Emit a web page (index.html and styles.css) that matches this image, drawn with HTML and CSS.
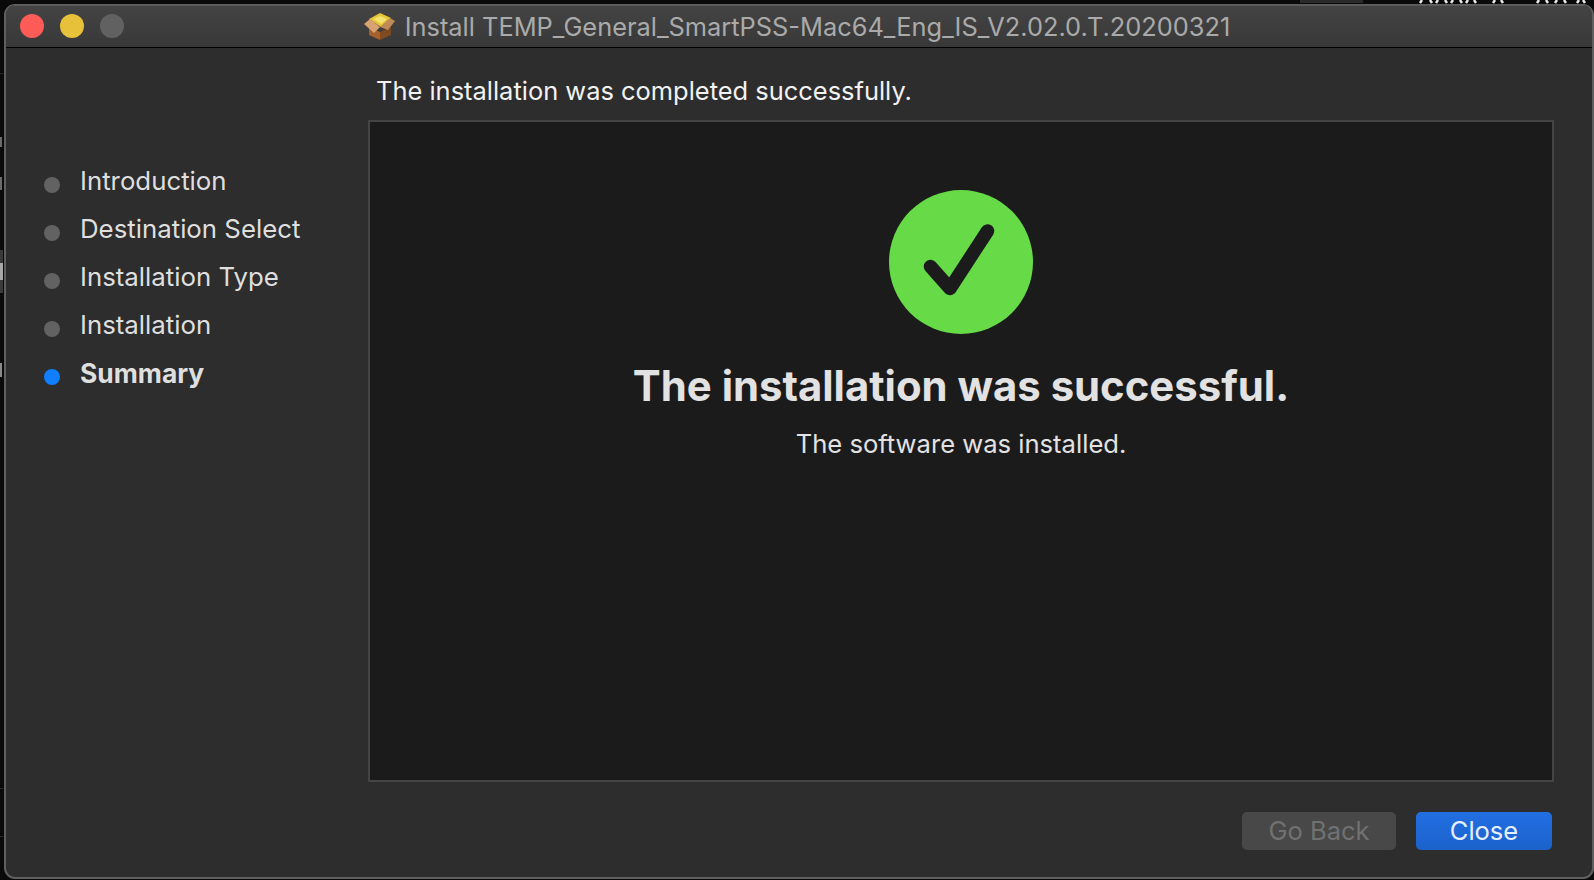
FILE: index.html
```html
<!DOCTYPE html>
<html lang="en">
<head>
  <meta charset="UTF-8" />
  <title>Install TEMP_General_SmartPSS-Mac64_Eng_IS_V2.02.0.T.20200321</title>
  <link rel="stylesheet" href="styles.css">
</head>
<body>
  <!-- whatever is behind the window, only slivers show -->
  <svg class="backdrop" width="1594" height="880" viewBox="0 0 1594 880">
    <rect x="1300" y="0" width="63" height="3" fill="#2b2b2b"/>
    <path d="M1420 3 L1422 0 M1432 3 L1430 0 M1436 3 L1438 0 M1447 3 L1445 0 M1451 3 L1453 0 M1462 3 L1460 0 M1466 3 L1468 0 M1476 3 L1474 0 M1493 3 L1495 0 M1503 3 L1501 0 M1537 3 L1539 0 M1548 3 L1546 0 M1555 3 L1557 0 M1566 3 L1564 0 M1577 3 L1579 0 M1585 3 L1583 0" stroke="#e8e8e8" stroke-width="2.5" fill="none"/>
    <rect x="0" y="250" width="3" height="43" fill="#3a3a3a"/>
    <rect x="0" y="263" width="3" height="17" fill="#a8a8a8"/>
    <rect x="0" y="137" width="2" height="10" fill="#6a6a6a"/>
    <rect x="0" y="177" width="2" height="13" fill="#6a6a6a"/>
    <rect x="0" y="363" width="2" height="14" fill="#8a8a8a"/>
    <rect x="0" y="73" width="3" height="1" fill="#2a2a2a"/>
    <rect x="0" y="788" width="3" height="1" fill="#2a2a2a"/>
    <rect x="0" y="836" width="3" height="1" fill="#2a2a2a"/>
  </svg>

  <div class="window">
    <header class="titlebar">
      <div class="lights">
        <span class="light light-close"></span>
        <span class="light light-min"></span>
        <span class="light light-zoom"></span>
      </div>
      <div class="title">
        <svg class="pkg" width="32" height="28" viewBox="0 0 32 28">
          <polygon points="5,15 16,20 16,28 5,23" fill="#a5612b"/>
          <polygon points="16,20 27,15 27,23 16,28" fill="#7f4a20"/>
          <polygon points="5,7 16,1 27,6 17,15" fill="#e4c534"/>
          <polygon points="9,7 16,4 23,7 17,12" fill="#f3e070"/>
          <polygon points="0,12 6,7 16,15 10,21" fill="#d9a273"/>
          <polygon points="31,9 26,6 16,15 24,18" fill="#c08a58"/>
        </svg>
        <span class="title-text">Install TEMP_General_SmartPSS-Mac64_Eng_IS_V2.02.0.T.20200321</span>
      </div>
    </header>

    <div class="main">
      <ul class="steps">
        <li class="step">Introduction</li>
        <li class="step">Destination Select</li>
        <li class="step">Installation Type</li>
        <li class="step">Installation</li>
        <li class="step step-current">Summary</li>
      </ul>

      <div class="content">
        <p class="content-title">The installation was completed successfully.</p>
        <section class="panel">
          <svg class="check" width="144" height="144" viewBox="0 0 144 144">
            <circle cx="72" cy="72" r="72" fill="#66da47"/>
            <path d="M41.5 76.5 L61 98.5 L98.5 41" fill="none" stroke="#1b1b1b" stroke-width="13.5" stroke-linecap="round" stroke-linejoin="round"/>
          </svg>
          <h1 class="result">The installation was successful.</h1>
          <p class="result-sub">The software was installed.</p>
        </section>
      </div>
    </div>

    <footer class="actions">
      <button class="button button-off">Go Back</button>
      <button class="button button-primary">Close</button>
    </footer>
  </div>
</body>
</html>
```

FILE: styles.css
```css
* {
  box-sizing: border-box;
}
html, body {
  height: 100%;
}
body {
  margin: 0;
  padding: 4px 0 0 4px;
  background: #0a0a0a;
  font-family: Inter, "Noto Sans", sans-serif;
  overflow: hidden;
}
.backdrop {
  position: absolute;
  left: 0;
  top: 0;
}
.window {
  position: relative;
  display: flex;
  flex-direction: column;
  height: 875px;
  background: #2d2d2d;
  border: 2px solid #5f5f5f;
  border-top-width: 1px;
  border-radius: 11px;
  overflow: hidden;
}
.titlebar {
  position: relative;
  display: flex;
  align-items: center;
  justify-content: center;
  flex: none;
  height: 43px;
  background: linear-gradient(#444444, #383838);
  border-bottom: 1px solid #000000;
  box-shadow: inset 0 1px #5a5a5a;
}
.lights {
  position: absolute;
  left: 14px;
  top: 9px;
  display: flex;
  gap: 16px;
}
.light {
  width: 24px;
  height: 24px;
  border-radius: 50%;
}
.light-close { background: #ff5b57; }
.light-min { background: #e6c139; }
.light-zoom { background: #616161; }
.title {
  display: flex;
  align-items: center;
  gap: 9px;
  margin-left: -4px;
  color: #aaaaaa;
  font-size: 25.4px;
  white-space: nowrap;
}
.main {
  display: flex;
  flex: none;
  height: 734px;
}
.steps {
  flex: none;
  width: 362px;
  margin: 0;
  padding: 109px 0 0 38px;
  list-style: none;
}
.step {
  position: relative;
  height: 48px;
  line-height: 48px;
  padding-left: 36px;
  color: #dfdfdf;
  font-size: 25.8px;
}
.step::before {
  content: "";
  position: absolute;
  left: 0;
  top: 20px;
  width: 16px;
  height: 16px;
  border-radius: 50%;
  background: #626262;
}
.step-current {
  font-size: 26.4px;
  font-weight: 700;
}
.step-current::before {
  background: #0f7fff;
}
.content {
  display: flex;
  flex-direction: column;
  width: 1186px;
}
.content-title {
  height: 72px;
  margin: 0;
  padding: 24px 0 0 8px;
  line-height: 38px;
  color: #f2f2f2;
  font-size: 25.45px;
}
.panel {
  display: flex;
  flex-direction: column;
  align-items: center;
  flex: 1;
  padding-top: 68px;
  background: #1b1b1b;
  border: 2px solid #444444;
}
.check {
  flex: none;
}
.result {
  margin: 22px 0 0;
  line-height: 60px;
  color: #e2e2e2;
  font-size: 41.85px;
  font-weight: 700;
}
.result-sub {
  margin: 12px 0 0;
  line-height: 32px;
  color: #e2e2e2;
  font-size: 25.6px;
}
.actions {
  display: flex;
  justify-content: flex-end;
  gap: 20px;
  padding: 30px 40px 0 0;
}
.button {
  height: 38px;
  padding: 0 0 2px;
  border: none;
  border-radius: 5px;
  font-family: inherit;
  font-size: 25.5px;
}
.button-off {
  width: 154px;
  background: #484848;
  color: #717171;
}
.button-primary {
  width: 136px;
  background: linear-gradient(#226fe2, #1b62cb);
  color: #e6efff;
}
```
